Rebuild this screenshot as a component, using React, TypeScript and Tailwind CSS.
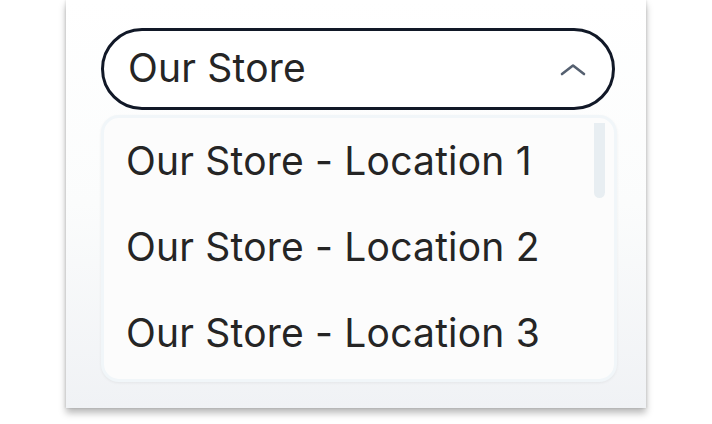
import { useState } from "react";

const locations = ["Our Store - Location 1", "Our Store - Location 2", "Our Store - Location 3"];

export default function App() {
  const [open] = useState(true);
  const [selected] = useState("Our Store");

  return (
    <div className="w-[712px] h-[424px] bg-white font-['Inter',sans-serif] overflow-hidden">
      {/* Panel */}
      <div className="ml-[66px] w-[580px] h-[408px] bg-gradient-to-b from-white via-[#fbfcfc] to-[#f0f2f5] shadow-[0_5px_7px_rgba(0,0,0,0.28),-1px_0_2px_rgba(0,0,0,0.08),1px_0_2px_rgba(0,0,0,0.08)] pt-[28px] pl-[35px]">
        {/* Select trigger */}
        <button className="w-[514px] h-[82px] rounded-full border-[3px] border-[#111827] bg-white flex items-center justify-between pl-[24px] pr-[26px]">
          <span className="text-[39px] text-[#252525] leading-none tracking-[0.2px] -mt-[3px]">{selected}</span>
          <svg width="26" height="14" viewBox="0 0 26 14" fill="none">
            <path d="M2 12 L13 3.5 L24 12" stroke="#556070" strokeWidth="2.6" strokeLinecap="round" strokeLinejoin="round" />
          </svg>
        </button>

        {/* Options */}
        {open && (
          <div className="relative mt-[5px] w-[516px] h-[267px] rounded-[18px] bg-[#fcfcfc] border-[3px] border-[#f1f6f9] shadow-[0_1px_3px_rgba(0,0,0,0.06)]">
            <div className="absolute right-[9px] top-[5px] w-[11px] h-[75px] rounded-b-md bg-[#e8eef2]" />
            {locations.map((loc) => (
              <div key={loc} className="h-[86px] flex items-center pl-[22px] pb-[2px] text-[39px] text-[#252525] leading-none tracking-[0.2px]">
                {loc}
              </div>
            ))}
          </div>
        )}
      </div>
    </div>
  );
}
